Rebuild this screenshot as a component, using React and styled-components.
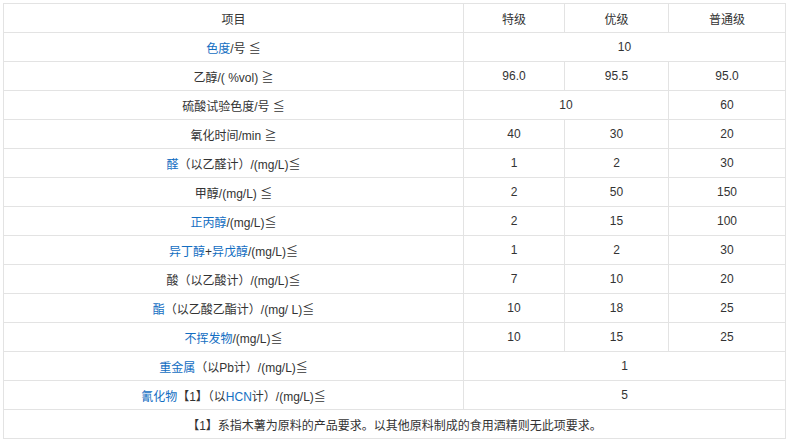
import React from "react";
import styled, { createGlobalStyle } from "styled-components";

const G = createGlobalStyle`
  body { margin: 0; padding: 3px; background: #fff; font-family: Arial, "Noto Sans CJK SC", sans-serif; }
`;
const Table = styled.table`
  border-collapse: collapse;
  width: 782px;
  table-layout: fixed;
  font-size: 12px;
  color: #333;
`;
const Td = styled.td`
  border: 1px solid #e3e3e3;
  height: 28px;
  padding: 0 4px;
  text-align: center;
  vertical-align: middle;
`;
const L = styled.span` color: #136ec2; `;

const rows = [
  [<><L>色度</L>/号 ≦</>, [["10", 3]]],
  ["乙醇/( %vol) ≧", [["96.0"], ["95.5"], ["95.0"]]],
  ["硫酸试验色度/号 ≦", [["10", 2], ["60"]]],
  ["氧化时间/min ≧", [["40"], ["30"], ["20"]]],
  [<><L>醛</L>（以乙醛计）/(mg/L)≦</>, [["1"], ["2"], ["30"]]],
  ["甲醇/(mg/L) ≦", [["2"], ["50"], ["150"]]],
  [<><L>正丙醇</L>/(mg/L)≦</>, [["2"], ["15"], ["100"]]],
  [<><L>异丁醇</L>+<L>异戊醇</L>/(mg/L)≦</>, [["1"], ["2"], ["30"]]],
  ["酸（以乙酸计）/(mg/L)≦", [["7"], ["10"], ["20"]]],
  [<><L>酯</L>（以乙酸乙酯计）/(mg/ L)≦</>, [["10"], ["18"], ["25"]]],
  [<><L>不挥发物</L>/(mg/L)≦</>, [["10"], ["15"], ["25"]]],
  [<><L>重金属</L>（以Pb计）/(mg/L)≦</>, [["1", 3]]],
  [<><L>氰化物</L>【1】（以<L>HCN</L>计）/(mg/L)≦</>, [["5", 3]]],
];

export default function App() {
  return (
    <>
      <G />
      <Table>
        <colgroup>
          <col style={{ width: 460 }} />
          <col style={{ width: 101 }} />
          <col style={{ width: 104 }} />
          <col style={{ width: 117 }} />
        </colgroup>
        <tbody>
          <tr><Td>项目</Td><Td>特级</Td><Td>优级</Td><Td>普通级</Td></tr>
          {rows.map((r, i) => (
            <tr key={i}>
              <Td>{r[0]}</Td>
              {r[1].map((c, j) => <Td key={j} colSpan={c[1] || 1}>{c[0]}</Td>)}
            </tr>
          ))}
          <tr><Td colSpan={4}>【1】系指木薯为原料的产品要求。以其他原料制成的食用酒精则无此项要求。</Td></tr>
        </tbody>
      </Table>
    </>
  );
}
